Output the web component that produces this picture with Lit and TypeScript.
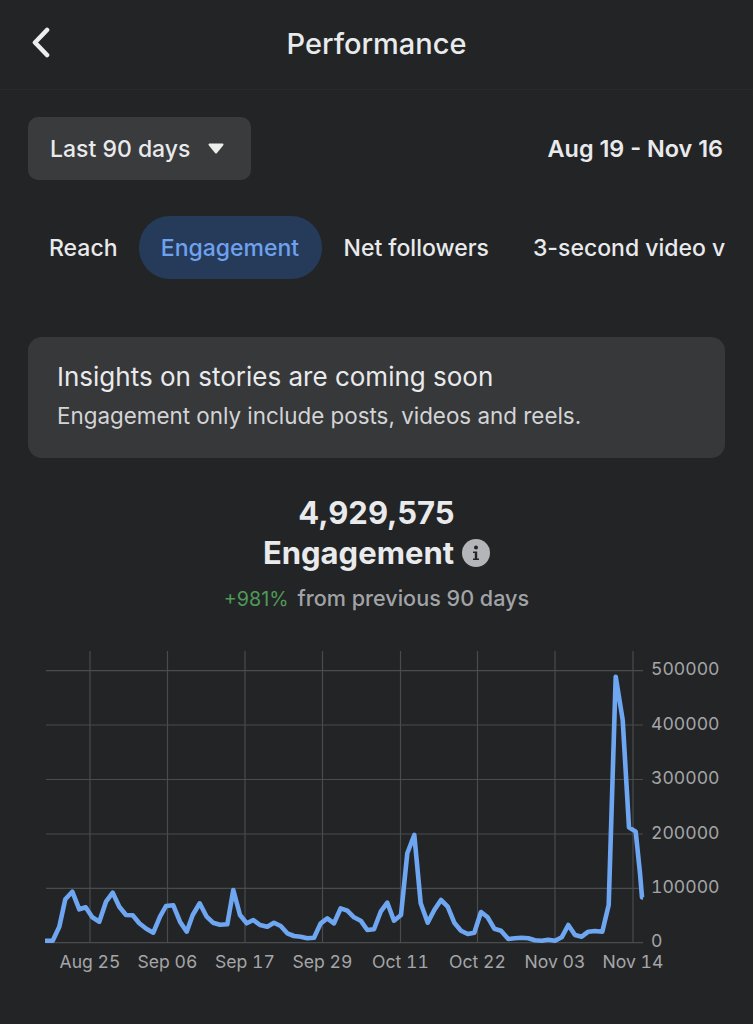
import { LitElement, html, css, svg } from 'lit';
import { customElement } from 'lit/decorators.js';

const TOP = 640; // chart svg starts here on the page

// line traced in two passes, [x, y] in page px * 3
const LEFT: number[][] = [[45,902],[68,902],[88,860],[106,778],[127,755],[148,808],[167,802],[187,832],[208,845],[228,785],[248,758],[268,800],[288,825],[308,826],[328,850],[349,866],[370,878],[390,830],[408,798],[430,796],[450,845],[470,875],[488,825],[509,790],[530,830],[549,848],[570,854],[592,853],[610,750],[630,825],[650,850],[670,840],[690,855],[712,860],[732,848],[752,858],[772,880],[792,888],[812,890],[832,895],[852,893],[872,850],[892,835],[912,850],[932,805],[952,812],[972,832],[992,842],[1012,870],[1032,868],[1052,815]];
const RIGHT: number[][] = [[22,788],[42,842],[63,825],[82,640],[103,585],[122,790],[143,848],[163,810],[183,780],[203,800],[223,848],[243,872],[263,882],[283,878],[303,816],[323,832],[343,866],[363,872],[385,897],[405,895],[425,893],[445,895],[465,901],[485,902],[505,899],[525,902],[545,892],[565,855],[585,885],[605,890],[625,875],[645,873],[667,875],[686,795],[707,110],[728,240],[747,562],[767,575],[780,700],[786,772],[790,773]];

const LINE = [
  ...LEFT.map(([x, y]) => [x / 3 + 30, y / 3]),
  ...RIGHT.map(([x, y]) => [x / 3 + 380, y / 3]),
].map(([x, y]) => `${x.toFixed(1)},${y.toFixed(1)}`).join(' ');

const Y_TICKS = [
  { y: 670.7, label: '500000' },
  { y: 725, label: '400000' },
  { y: 779.5, label: '300000' },
  { y: 834, label: '200000' },
  { y: 888.3, label: '100000' },
  { y: 942.7, label: '0' },
];
const X_TICKS = [
  { x: 90, label: 'Aug 25' },
  { x: 167.5, label: 'Sep 06' },
  { x: 245, label: 'Sep 17' },
  { x: 322.5, label: 'Sep 29' },
  { x: 400.5, label: 'Oct 11' },
  { x: 477.5, label: 'Oct 22' },
  { x: 555, label: 'Nov 03' },
  { x: 633, label: 'Nov 14' },
];

@customElement('app-root')
export class AppRoot extends LitElement {
  static styles = css`
    :host {
      display: block;
      width: 753px;
      height: 1024px;
      overflow: hidden;
      background: #232426;
      color: #e9eaec;
      font-family: Inter, 'Liberation Sans', sans-serif;
    }
    .header {
      height: 90px;
      box-sizing: border-box;
      display: flex;
      align-items: center;
      justify-content: center;
      position: relative;
      border-bottom: 1px solid #2a2b2d;
    }
    .header h1 {
      margin: 0 0 3px;
      font-size: 29px;
      font-weight: 500;
    }
    .back {
      position: absolute;
      left: 30px;
      top: 27px;
    }
    .filter-row {
      display: flex;
      align-items: center;
      justify-content: space-between;
      margin-top: 27px;
      padding: 0 30px 0 28px;
    }
    .filter {
      width: 223px;
      height: 63px;
      box-sizing: border-box;
      padding-left: 22px;
      display: flex;
      align-items: center;
      gap: 18px;
      background: #3a3b3d;
      border-radius: 10px;
      font-size: 23px;
      font-weight: 500;
    }
    .range {
      font-size: 23.4px;
      font-weight: 600;
    }
    .tabs {
      display: flex;
      align-items: center;
      margin: 36px 28px 0 28px;
      padding-left: 21px;
      white-space: nowrap;
      font-size: 23px;
      font-weight: 500;
    }
    .tab {
      flex: none;
    }
    .tab.reach {
      margin-right: 21px;
    }
    .tab.active {
      width: 183px;
      height: 63px;
      display: flex;
      align-items: center;
      justify-content: center;
      box-sizing: border-box;
      border-radius: 31px;
      background: #263b5a;
      color: #6ea2ee;
      margin-right: 22px;
    }
    .tab.net {
      margin-right: 44px;
    }
    .banner {
      margin: 58px 28px 0;
      height: 121px;
      box-sizing: border-box;
      padding: 0 29px 5px;
      display: flex;
      flex-direction: column;
      justify-content: center;
      gap: 9px;
      background: #37383a;
      border-radius: 14px;
    }
    .banner .title {
      font-size: 26px;
      font-weight: 400;
      line-height: 32px;
    }
    .banner .sub {
      font-size: 22.4px;
      color: #d3d4d6;
      line-height: 28px;
    }
    .stats {
      margin-top: 36px;
      display: flex;
      flex-direction: column;
      align-items: center;
    }
    .total {
      font-size: 31px;
      font-weight: 700;
      line-height: 38px;
    }
    .name {
      display: flex;
      align-items: center;
      gap: 8px;
      font-size: 31px;
      font-weight: 700;
      line-height: 38px;
      margin-top: 2px;
    }
    .info {
      width: 28px;
      height: 28px;
      display: block;
    }
    .delta {
      margin-top: 13px;
      font-size: 21.6px;
      font-weight: 500;
      color: #a1a3a6;
      display: flex;
      align-items: baseline;
      gap: 9px;
      line-height: 26px;
    }
    .delta .up {
      color: #4f9a58;
      font-size: 19.7px;
      font-weight: 400;
    }
    .chart {
      display: block;
      margin-top: 28px;
    }
    .chart text {
      font-family: Inter, 'Liberation Sans', sans-serif;
      font-size: 17.6px;
      font-variant-numeric: tabular-nums;
      fill: #a5a6a8;
    }
  `;

  renderChart() {
    return html`
      <svg class="chart" width="753" height="340" viewBox="0 ${TOP} 753 340">
        ${X_TICKS.map(t => svg`
          <line x1=${t.x} x2=${t.x} y1="651" y2="943" stroke="#4a4b4d" stroke-width="1.2"></line>
          <text x=${t.x} y="967.5" text-anchor="middle">${t.label}</text>
        `)}
        ${Y_TICKS.map(t => svg`
          <line x1="46" x2="643" y1=${t.y} y2=${t.y} stroke="#4a4b4d" stroke-width="1.2"></line>
          <text x="651" y=${t.y + 4.5} >${t.label}</text>
        `)}
        <polyline
          transform="translate(0 ${TOP})"
          points=${LINE}
          fill="none"
          stroke="#6ea6f2"
          stroke-width="4.6"
          stroke-linejoin="round"
        ></polyline>
      </svg>
    `;
  }

  render() {
    return html`
      <div class="header">
        <svg class="back" width="22" height="32" viewBox="0 0 22 32">
          <path d="M17 3 L5 15.5 L17 28" fill="none" stroke="#eceded" stroke-width="4.6" stroke-linecap="round" stroke-linejoin="round"></path>
        </svg>
        <h1>Performance</h1>
      </div>

      <div class="filter-row">
        <div class="filter">
          <span>Last 90 days</span>
          <svg width="16" height="11" viewBox="0 0 16 11">
            <path d="M1.5 1.5 H14.5 L8 9.5 Z" fill="#eceded" stroke="#eceded" stroke-width="2" stroke-linejoin="round"></path>
          </svg>
        </div>
        <div class="range">Aug 19 - Nov 16</div>
      </div>

      <div class="tabs">
        <div class="tab reach">Reach</div>
        <div class="tab active">Engagement</div>
        <div class="tab net">Net followers</div>
        <div class="tab">3-second video v</div>
      </div>

      <div class="banner">
        <div class="title">Insights on stories are coming soon</div>
        <div class="sub">Engagement only include posts, videos and reels.</div>
      </div>

      <div class="stats">
        <div class="total">4,929,575</div>
        <div class="name">
          <span>Engagement</span>
          <svg class="info" viewBox="0 0 28 28">
            <circle cx="14" cy="14" r="14" fill="#b4b5b8"></circle>
            <circle cx="14" cy="8.5" r="2" fill="#232426"></circle>
            <path d="M11 12.5 H15.2 V19.5 H17 V21 H11 V19.5 H12.8 V14 H11 Z" fill="#232426"></path>
          </svg>
        </div>
        <div class="delta"><span class="up">+981%</span><span>from previous 90 days</span></div>
      </div>

      ${this.renderChart()}
    `;
  }
}
